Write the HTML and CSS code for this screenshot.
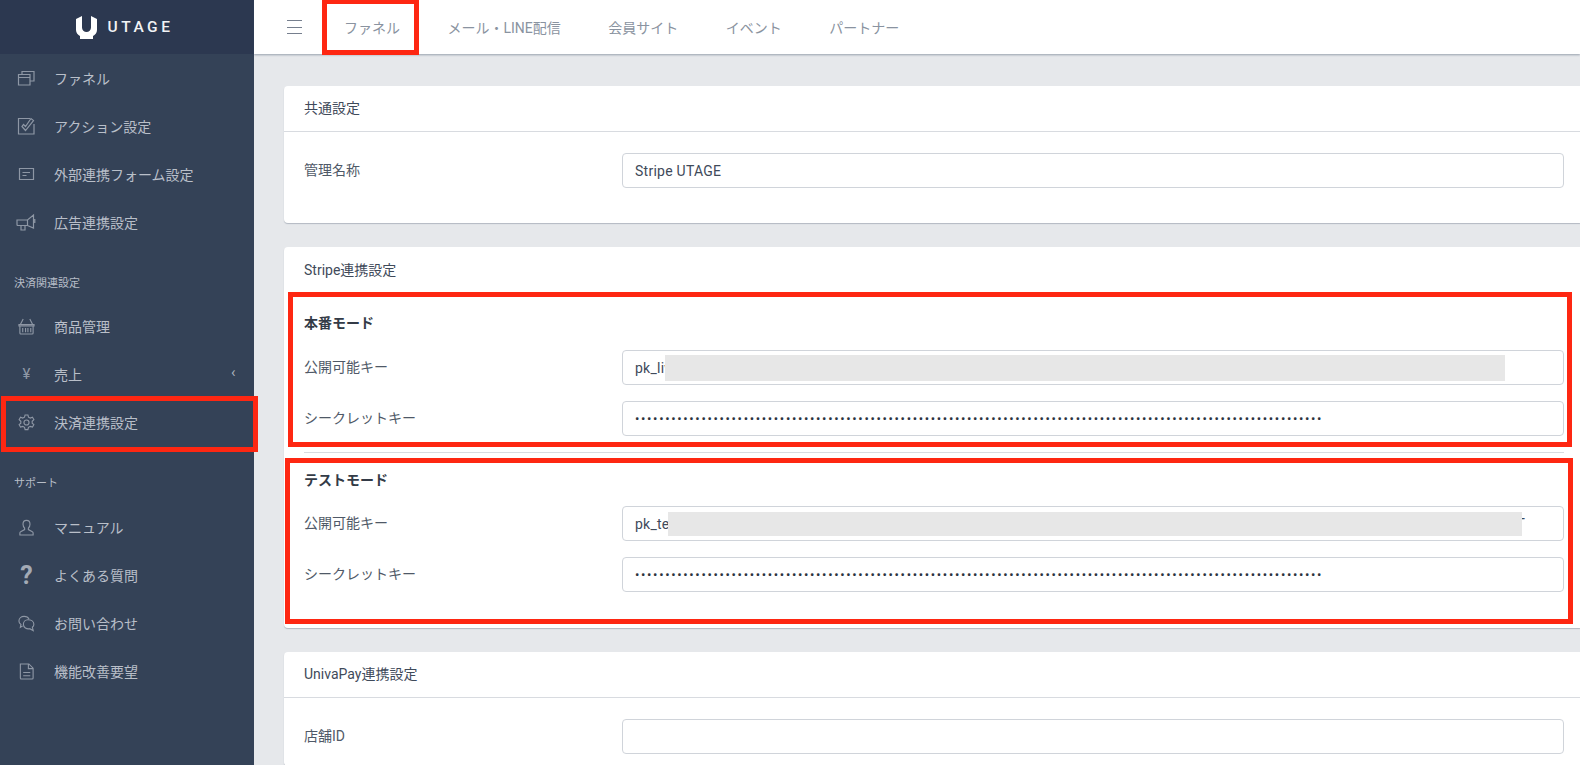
FILE: index.html
```html
<!DOCTYPE html>
<html lang="ja">
<head>
<meta charset="utf-8">
<title>UTAGE</title>
<link rel="stylesheet" href="styles.css">
</head>
<body>
<div class="app">
  <aside class="sidebar">
    <div class="brand">
      <svg class="brand-mark" viewBox="0 0 21 23"><path fill="#fff" d="M0 3 L6 0 V11.500 a4.500 4.500 0 0 0 9 0 V0 L21 3 V14 C21 17 19 19 17 20 V23 H4 V20 C2 19 0 17 0 14 Z"/></svg>
      <span class="brand-name">UTAGE</span>
    </div>
    <nav class="side-nav">
      <a class="side-item"><svg class="ico" viewBox="0 0 17 17"><path d="M.5 4.500h11.500v10.500H.5zM.5 7.500h11.500M4 4.500V1.500H16V11h-4"/></svg>ファネル</a>
      <a class="side-item"><svg class="ico" viewBox="0 0 17 17"><path d="M12 .5H.5V16H16V6M4 8.500L7.500 12.500L15.500 2.500L13 .5L7.500 8.500L5.500 6.500Z"/></svg>アクション設定</a>
      <a class="side-item"><svg class="ico" viewBox="0 0 17 17"><path d="M1.500 2.500h14v11h-14zM4.500 6.500h7.500M4.500 9.500h4"/></svg>外部連携フォーム設定</a>
      <a class="side-item"><svg class="ico" viewBox="0 0 17 17"><path d="M-1 6H9.500L15.500 1V14L9.500 11.500H0Q-1 11.500-1 10.500ZM3 11.500V16H7V11.500M9.500 6V11.500M16.800 5V9"/></svg>広告連携設定</a>
      <div class="side-head side-head-first">決済関連設定</div>
      <a class="side-item"><svg class="ico" viewBox="0 0 18 18"><path d="M1 7h16v1.500H1zM2 8.500h14V16a1 1 0 0 1-1 1H3a1 1 0 0 1-1-1zM2.500 7L5.500 1M15.500 7L12.500 1M5 10.500V15M8 10.500V15M10.500 10.500V15M13.500 10.500V15"/></svg>商品管理</a>
      <a class="side-item has-arrow"><span class="ico yen">¥</span>売上<span class="arrow">‹</span></a>
      <a class="side-item"><svg class="ico" viewBox="0 0 18 18"><path d="M7.500 1h3l.6 2.400 1.900.9 2.300-.9 1.500 2.500-1.800 1.800v2l1.800 1.600-1.500 2.600-2.300-.8-1.900 1-.6 2.400h-3l-.6-2.400-1.900-1-2.300.8-1.500-2.600 1.800-1.600v-2L1.200 5.900l1.500-2.500 2.300.9 1.900-.9z"/><circle cx="9" cy="9" r="2.700"/></svg>決済連携設定</a>
      <div class="side-head">サポート</div>
      <a class="side-item"><svg class="ico" viewBox="0 0 18 18"><path d="M9 1.500c-2.400 0-3.700 1.800-3.700 4 0 2 .9 3.300 1.700 4.200v1.500L2.800 13.500c-.6.300-.8.800-.8 1.400V17h14v-2.100c0-.6-.2-1.100-.8-1.400L11 11.200V9.700c.8-.9 1.700-2.200 1.700-4.200 0-2.200-1.300-4-3.700-4z"/></svg>マニュアル</a>
      <a class="side-item"><span class="ico question">?</span>よくある質問</a>
      <a class="side-item"><svg class="ico" viewBox="0 0 18 18"><path d="M5 11.500L2.500 13l.6-3C1.500 9 1 7.500 1 6.300 1 3.500 3.500 1.500 6.500 1.500c2.500 0 4.300 1 5.200 2.800M10.500 5c3.500 0 6.300 2 6.300 4.700 0 1.500-.7 2.500-1.600 3.300l.9 3.500-3.700-2c-3.300.7-6.700-1.300-6.700-4.600C5.700 7.200 7.700 5 10.500 5z"/></svg>お問い合わせ</a>
      <a class="side-item"><svg class="ico" viewBox="0 0 18 18"><path d="M2.500 1h9L16 5.500V16a1 1 0 0 1-1 1H3.500a1 1 0 0 1-1-1zM11 1v5h5M5.500 10h7.500M5.500 13.500h7.500"/></svg>機能改善要望</a>
    </nav>
  </aside>
  <div class="main">
    <header class="topbar">
      <button class="menu-btn" aria-label="メニュー"><span></span><span></span><span></span></button>
      <a class="top-item">ファネル</a>
      <a class="top-item">メール・LINE配信</a>
      <a class="top-item">会員サイト</a>
      <a class="top-item">イベント</a>
      <a class="top-item">パートナー</a>
    </header>
    <main class="content">
      <section class="card card-common">
        <h2 class="card-title">共通設定</h2>
        <div class="card-body">
          <div class="row"><label class="row-label">管理名称</label><input class="field" value="Stripe UTAGE"></div>
        </div>
      </section>
      <section class="card card-stripe">
        <h2 class="card-title">Stripe連携設定</h2>
        <div class="card-body">
          <h3 class="mode mode-live">本番モード</h3>
          <div class="row"><label class="row-label">公開可能キー</label><input class="field" value="pk_live_519028374651902837465190283746519028374651902837465190283746519028374651902837465190283746"></div>
          <div class="row"><label class="row-label">シークレットキー</label><input class="field secret" type="password" value="xxxxxxxxxxxxxxxxxxxxxxxxxxxxxxxxxxxxxxxxxxxxxxxxxxxxxxxxxxxxxxxxxxxxxxxxxxxxxxxxxxxxxxxxxxxxxxxxxxxxxxxxxxxxxxxxxx"></div>
          <hr class="divider">
          <h3 class="mode mode-test">テストモード</h3>
          <div class="row"><label class="row-label">公開可能キー</label><input class="field" value="pk_test_519028374651902837465190283746519028374651902837465190283746519028374651902837465190283746519028374651T"></div>
          <div class="row"><label class="row-label">シークレットキー</label><input class="field secret" type="password" value="xxxxxxxxxxxxxxxxxxxxxxxxxxxxxxxxxxxxxxxxxxxxxxxxxxxxxxxxxxxxxxxxxxxxxxxxxxxxxxxxxxxxxxxxxxxxxxxxxxxxxxxxxxxxxxxxxx"></div>
        </div>
      </section>
      <section class="card card-univa">
        <h2 class="card-title">UnivaPay連携設定</h2>
        <div class="card-body">
          <div class="row row-last"><label class="row-label">店舗ID</label><input class="field"></div>
        </div>
      </section>
    </main>
  </div>
</div>
<div class="mask mask-live"></div>
<div class="mask mask-test"></div>
<div class="mark mark-nav"></div>
<div class="mark mark-side"></div>
<div class="mark mark-live"></div>
<div class="mark mark-test"></div>
</body>
</html>
```
FILE: styles.css
```css
* { box-sizing: border-box; }
html, body { margin: 0; height: 100%; overflow: hidden; }
body {
  font-family: Roboto, "Noto Sans CJK JP", sans-serif;
  font-size: 14px;
  color: #3c4b64;
  background: #e6e8eb;
}
.app { display: flex; height: 765px; }
.sidebar { width: 254px; flex: none; background: #344257; color: #b7bdc7; }
.brand {
  height: 54px;
  background: #2c3850;
  display: flex;
  align-items: center;
  justify-content: center;
  gap: 11px;
  padding-right: 5px;
}
.brand-mark { width: 21px; height: 23px; }
.brand-name { color: #f2f3f5; font-size: 15.500px; font-weight: 500; letter-spacing: 3.500px; }
.side-item {
  height: 48px;
  display: flex;
  align-items: center;
  padding-left: 18px;
  font-size: 14px;
  color: #b9bfc9;
  position: relative;
}
.ico {
  width: 17px;
  height: 17px;
  margin-right: 19px;
  flex: none;
  fill: none;
  stroke: #8e97a5;
  stroke-width: 1.200;
  overflow: visible;
}
.yen, .question { display: flex; justify-content: center; align-items: center; color: #8e97a5; }
.yen { font-size: 15px; }
.question { font-size: 25px; font-weight: 700; color: #a3aab5; }
.arrow { position: absolute; left: 231px; top: 13px; font-size: 15px; color: #aab1bc; }
.side-head { height: 57px; padding: 30px 0 0 14px; font-size: 11px; color: #b7bdc7; line-height: 16px; }
.side-head-first { height: 56px; padding-top: 30px; }
.main { flex: 1; min-width: 0; }
.topbar {
  height: 54px;
  background: #fff;
  display: flex;
  align-items: center;
  padding-left: 33px;
  box-shadow: 0 1px 2px rgba(60, 75, 100, .45);
  position: relative;
  font-size: 14px;
}
.menu-btn { width: 15px; height: 14px; padding: 0; border: 0; background: none; display: flex; flex-direction: column; justify-content: space-between; margin-right: 42px; }
.menu-btn span { display: block; height: 1px; background: #767f8e; }
.top-item { color: #8a93a0; margin-right: 47.500px; white-space: nowrap; }
.content { padding: 32px 0 0 30px; width: 1326px; height: 711px; overflow: hidden; }
.card { background: #fff; border-radius: 4px 0 0 4px; box-shadow: 0 1px 1px rgba(60, 75, 100, .3); margin-bottom: 24px; }
.card-title { margin: 0; height: 46px; padding: 0 20px 3px; display: flex; align-items: center; font-size: 14px; font-weight: 400; color: #3f4a5a; border-bottom: 1px solid #d8dbe0; }
.card-common { height: 137px; }
.card-stripe { height: 381px; }
.card-univa { height: 114px; margin-bottom: 0; }
.card-stripe .card-title { border-bottom: 0; }
.card-body { padding: 21px 16px 0 20px; }
.card-stripe .card-body { padding-top: 0; }
.row { display: flex; align-items: center; height: 35px; margin-bottom: 16px; }
.row-last { margin-bottom: 0; }
.row-label { width: 318px; color: #4f5967; flex: none; padding-bottom: 4px; }
.field {
  flex: none;
  width: 942px;
  height: 35px;
  border: 1px solid #d0d4da;
  border-radius: 4px;
  padding: 0 12px;
  font: 14px Roboto, "Noto Sans CJK JP", sans-serif;
  letter-spacing: .25px;
  color: #3f4a5a;
  background: #fff;
  outline: 0;
}
.secret { font-size: 13px; letter-spacing: 1.650px; color: #2c3440; }
.mode { margin: 0; padding-top: 12px; height: 57px; font-size: 14px; font-weight: 700; color: #333b47; line-height: 36px; }
.mode-test { padding-top: 9px; height: 53px; }
.divider { border: 0; border-top: 1px solid #d8dbe0; margin: 0; height: 1px; }
.mask { position: fixed; background: #e7e7e7; }
.mask-live { left: 665px; top: 355px; width: 840px; height: 26px; }
.mask-test { left: 668px; top: 512px; width: 854px; height: 24px; }
.mark { position: fixed; border: 5px solid #fe2712; }
.mark-nav { left: 322px; top: -1px; width: 97px; height: 56px; }
.mark-side { left: 1px; top: 396px; width: 257px; height: 56px; }
.mark-live { left: 288px; top: 292px; width: 1284px; height: 155px; }
.mark-test { left: 285px; top: 458px; width: 1288px; height: 166px; }
```
